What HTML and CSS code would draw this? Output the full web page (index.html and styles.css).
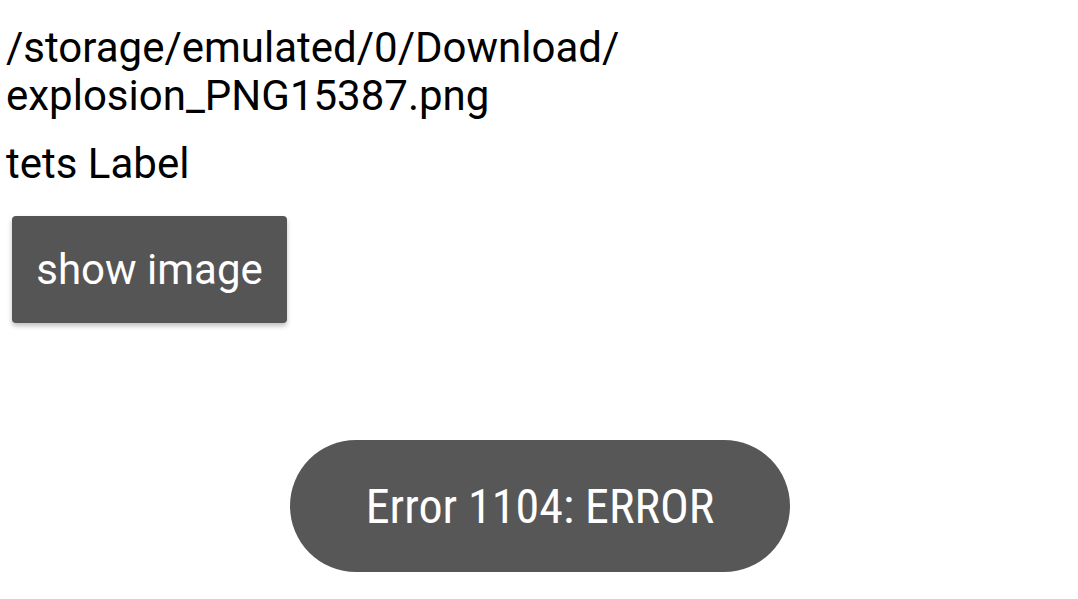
FILE: index.html
```html
<!DOCTYPE html>
<html lang="en">
<head>
  <meta charset="UTF-8">
  <title>Show image</title>
  <link rel="stylesheet" href="styles.css">
</head>
<body>
  <div class="app-bar"></div>

  <main class="content">
    <p class="file-path">/storage/emulated/0/Download/<br>explosion_PNG15387.png</p>
    <p class="label">tets Label</p>
    <button class="btn">show image</button>
  </main>

  <div class="toast">
    <span class="toast-text">Error 1104: ERROR</span>
  </div>
</body>
</html>
```

FILE: styles.css
```css
:root {
  --color-text: #000;
  --color-button: #555555;
  --color-toast: #575757;
  --font-primary: Roboto, "Noto Sans", sans-serif;
}

* {
  box-sizing: border-box;
  margin: 0;
  padding: 0;
}

body {
  font-family: var(--font-primary);
  background-color: #fff;
  color: var(--color-text);
  width: 1078px;
  height: 599px;
  overflow: hidden;
  position: relative;
}

.app-bar {
  height: 0;
  margin: 0 8px;
  box-shadow: 0 1px 5px rgba(0, 0, 0, 0.25);
}

.content {
  padding: 24px 6px 0;
}

.file-path {
  font-size: 42px;
  line-height: 48px;
}

.label {
  font-size: 42px;
  line-height: 48px;
  margin-top: 20px;
}

.btn {
  display: block;
  margin: 28px 0 0 6px;
  width: 275px;
  height: 107px;
  background-color: var(--color-button);
  color: #fff;
  border: none;
  border-radius: 4px;
  font-family: var(--font-primary);
  font-size: 42px;
  box-shadow: 0 3px 5px rgba(0, 0, 0, 0.25);
}

/* Toast over the page */
.toast {
  position: absolute;
  left: 290px;
  top: 440px;
  width: 500px;
  height: 132px;
  border-radius: 66px;
  background-color: var(--color-toast);
  display: flex;
  align-items: center;
  justify-content: center;
}

.toast-text {
  color: #fff;
  font-size: 48px;
  font-stretch: condensed;
}
```
